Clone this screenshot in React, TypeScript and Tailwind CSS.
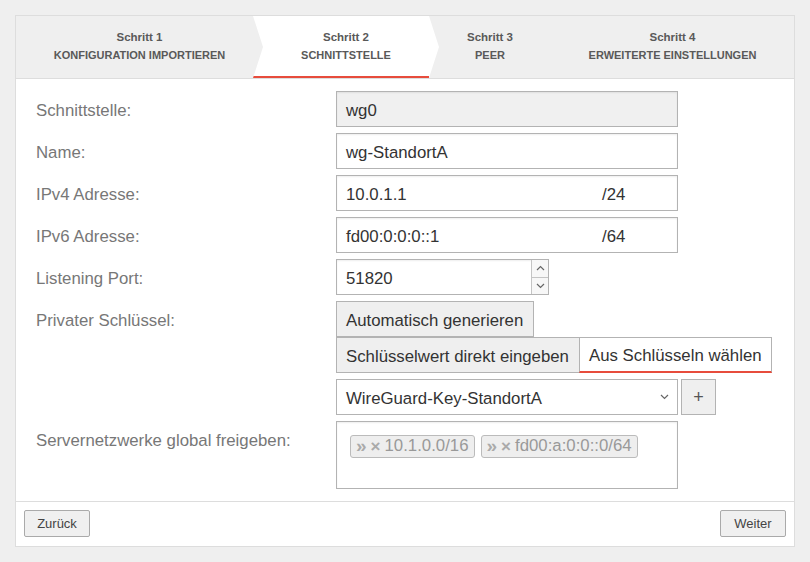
import { ReactNode } from 'react'

const steps = [
  { n: 1, title: 'KONFIGURATION IMPORTIEREN', w: 'w-[247px]' },
  { n: 2, title: 'SCHNITTSTELLE', w: 'w-[186px] -ml-[10px]' },
  { n: 3, title: 'PEER', w: 'w-[122px] -ml-[10px]' },
  { n: 4, title: 'ERWEITERTE EINSTELLUNGEN', w: 'flex-1' },
]

function Row({ label, children }: { label: string; children: ReactNode }) {
  return (
    <div className="flex">
      <div className="w-[300px] h-[36px] pt-[4px] flex items-center text-[#777]">{label}</div>
      <div className="flex flex-col">{children}</div>
    </div>
  )
}

function Field({ value, suffix, readOnly }: { value: string; suffix?: string; readOnly?: boolean }) {
  return (
    <div
      className={
        'w-[342px] h-[36px] border border-[#b3b3b3] flex items-center pl-[9px] pt-[3px] text-[#333] shadow-[inset_0_1px_2px_rgba(0,0,0,0.07)] ' +
        (readOnly ? 'bg-[#f0f0f0]' : 'bg-white')
      }
    >
      <span className="w-[256px]">{value}</span>
      {suffix && <span>{suffix}</span>}
    </div>
  )
}

function Chevron({ up }: { up?: boolean }) {
  return (
    <svg width="9" height="6" viewBox="0 0 9 6" className="text-[#666]">
      <path d={up ? 'M1 5L4.5 1.5L8 5' : 'M1 1L4.5 4.5L8 1'} fill="none" stroke="currentColor" strokeWidth="1.2" />
    </svg>
  )
}

function Tag({ text }: { text: string }) {
  return (
    <div className="h-[23px] flex items-center px-[5px] gap-[4px] bg-[#eeeeee] border border-[#bbb] rounded-[3px] text-[#999] leading-none">
      <span className="font-bold text-[19px] text-[#aaa] -mt-[2px]">»</span>
      <span className="font-bold text-[17px] text-[#aaa]">×</span>
      <span>{text}</span>
    </div>
  )
}

const btn = 'h-[36px] border border-[#b3b3b3] text-[#333] flex items-center pl-[9px] pt-[3px]'

export default function App() {
  return (
    <div className="w-[810px] h-[562px] bg-[#efefef] p-[15px] font-['Liberation_Sans',Arial,sans-serif]">
      <div className="h-full bg-white border border-[#dddddd] flex flex-col">
        <div className="h-[63px] bg-[#efefef] border-b border-[#dddddd] flex">
          {steps.map((s) => {
            const active = s.n === 2
            return (
              <div
                key={s.n}
                className={
                  'relative h-full flex flex-col items-center justify-center pb-[2px] leading-[18px] text-[#595959] ' +
                  s.w +
                  (active ? ' bg-white [clip-path:polygon(0_0,176px_0,100%_50%,176px_100%,0_100%,10px_50%)]' : '')
                }
              >
                <div className="font-bold text-[11.5px]">Schritt {s.n}</div>
                <div className="font-bold text-[11px]">{s.title}</div>
                {active && <div className="absolute left-0 bottom-0 w-[176px] h-[2px] bg-[#e74c3c]" />}
              </div>
            )
          })}
        </div>

        <div className="flex-1 pl-[20px] pt-[12px] text-[16.8px] flex flex-col gap-[6px]">
          <Row label="Schnittstelle:">
            <Field value="wg0" readOnly />
          </Row>
          <Row label="Name:">
            <Field value="wg-StandortA" />
          </Row>
          <Row label="IPv4 Adresse:">
            <Field value="10.0.1.1" suffix="/24" />
          </Row>
          <Row label="IPv6 Adresse:">
            <Field value="fd00:0:0:0::1" suffix="/64" />
          </Row>
          <Row label="Listening Port:">
            <div className="w-[213px] h-[36px] border border-[#b3b3b3] flex bg-white text-[#333] shadow-[inset_0_1px_2px_rgba(0,0,0,0.07)]">
              <span className="flex-1 pl-[9px] pt-[3px] flex items-center">51820</span>
              <div className="w-[17px] border-l border-[#c4c4c4] flex flex-col bg-[#f7f7f7]">
                <div className="flex-1 flex items-center justify-center border-b border-[#c4c4c4]">
                  <Chevron up />
                </div>
                <div className="flex-1 flex items-center justify-center">
                  <Chevron />
                </div>
              </div>
            </div>
          </Row>
          <Row label="Privater Schlüssel:">
            <div className={btn + ' w-[198px] bg-[#efefef]'}>Automatisch generieren</div>
            <div className="flex">
              <div className={btn + ' w-[244px] bg-[#efefef]'}>Schlüsselwert direkt eingeben</div>
              <div className={btn + ' w-[193px] -ml-px border-b-2 border-b-[#e74c3c] bg-white'}>
                Aus Schlüsseln wählen
              </div>
            </div>
            <div className="flex gap-[3px] mt-[6px]">
              <div className={btn + ' w-[342px] bg-white pr-[8px]'}>
                <span className="flex-1">WireGuard-Key-StandortA</span>
                <span className="-mt-[3px]">
                  <Chevron />
                </span>
              </div>
              <div className="w-[35px] h-[36px] border border-[#b3b3b3] bg-[#efefef] text-[#555] flex items-center justify-center text-[18px]">
                +
              </div>
            </div>
          </Row>
          <Row label="Servernetzwerke global freigeben:">
            <div className="w-[342px] h-[68px] border border-[#b3b3b3] bg-white shadow-[inset_0_1px_2px_rgba(0,0,0,0.07)] pl-[13px] pt-[13px] flex items-start gap-[6px]">
              <Tag text="10.1.0.0/16" />
              <Tag text="fd00:a:0:0::0/64" />
            </div>
          </Row>
        </div>

        <div className="h-[45px] border-t border-[#dddddd] flex items-start justify-between px-[8px] pt-[8px] text-[13px] text-[#444]">
          <div className="h-[27px] w-[66px] flex items-center justify-center bg-[#f0f0f0] border border-[#aaa] rounded-[2px]">
            Zurück
          </div>
          <div className="h-[27px] w-[66px] flex items-center justify-center bg-[#f0f0f0] border border-[#aaa] rounded-[2px]">
            Weiter
          </div>
        </div>
      </div>
    </div>
  )
}
